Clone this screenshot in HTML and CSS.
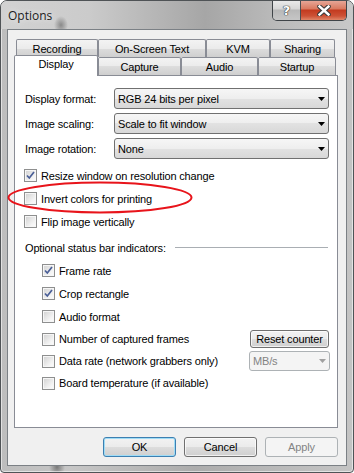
FILE: index.html
```html
<!DOCTYPE html>
<html lang="en">
<head>
  <meta charset="UTF-8" />
  <title>Options</title>
  <link rel="stylesheet" href="styles.css">
</head>
<body>
  <div class="window">
    <div class="titlebar">
      <span class="title">Options</span>
      <div class="caption">
        <span class="cap cap-help">?</span>
        <span class="cap cap-close">
          <svg width="14" height="11" viewBox="0 0 14 11">
            <path d="M2.5 1.5 L11.5 9.5 M11.5 1.5 L2.5 9.5" stroke="#3b3b3b" stroke-width="4.6" stroke-linecap="round" fill="none"/>
            <path d="M2.5 1.5 L11.5 9.5 M11.5 1.5 L2.5 9.5" stroke="#fff" stroke-width="2.4" stroke-linecap="square" fill="none"/>
          </svg>
        </span>
      </div>
    </div>

    <div class="client">
      <div class="tabs">
        <div class="tab-row row-back">
          <span class="tab t-rec">Recording</span>
          <span class="tab t-ost">On-Screen Text</span>
          <span class="tab t-kvm">KVM</span>
          <span class="tab t-sha">Sharing</span>
        </div>
        <div class="tab-row row-front">
          <span class="tab active t-dis">Display</span>
          <span class="tab t-cap">Capture</span>
          <span class="tab t-aud">Audio</span>
          <span class="tab t-sta">Startup</span>
        </div>
      </div>

      <div class="panel">
        <div class="field">
          <label>Display format:</label>
          <div class="combo"><span>RGB 24 bits per pixel</span><svg class="arrow" width="7" height="4"><polygon points="0,0 7,0 3.5,4" fill="#000"/></svg></div>
        </div>
        <div class="field">
          <label>Image scaling:</label>
          <div class="combo"><span>Scale to fit window</span><svg class="arrow" width="7" height="4"><polygon points="0,0 7,0 3.5,4" fill="#000"/></svg></div>
        </div>
        <div class="field last">
          <label>Image rotation:</label>
          <div class="combo"><span>None</span><svg class="arrow" width="7" height="4"><polygon points="0,0 7,0 3.5,4" fill="#000"/></svg></div>
        </div>

        <div class="check">
          <span class="cb on"><svg width="11" height="11" viewBox="0 0 11 11"><path d="M2 5.5 L4.3 8 L9 2" stroke="#4a5f97" stroke-width="1.7" fill="none"/></svg></span>
          <span>Resize window on resolution change</span>
        </div>
        <div class="check">
          <span class="cb"></span>
          <span>Invert colors for printing</span>
        </div>
        <div class="check">
          <span class="cb"></span>
          <span>Flip image vertically</span>
        </div>

        <div class="group-head">Optional status bar indicators:</div>

        <div class="check sub">
          <span class="cb on"><svg width="11" height="11" viewBox="0 0 11 11"><path d="M2 5.5 L4.3 8 L9 2" stroke="#4a5f97" stroke-width="1.7" fill="none"/></svg></span>
          <span>Frame rate</span>
        </div>
        <div class="check sub">
          <span class="cb on"><svg width="11" height="11" viewBox="0 0 11 11"><path d="M2 5.5 L4.3 8 L9 2" stroke="#4a5f97" stroke-width="1.7" fill="none"/></svg></span>
          <span>Crop rectangle</span>
        </div>
        <div class="check sub">
          <span class="cb"></span>
          <span>Audio format</span>
        </div>
        <div class="check sub short">
          <span class="cb"></span>
          <span>Number of captured frames</span>
          <button class="btn btn-reset">Reset counter</button>
        </div>
        <div class="check sub short">
          <span class="cb"></span>
          <span>Data rate (network grabbers only)</span>
          <div class="combo combo-off"><span>MB/s</span><svg class="arrow" width="7" height="4"><polygon points="0,0 7,0 3.5,4" fill="#a0a0a0"/></svg></div>
        </div>
        <div class="check sub short">
          <span class="cb"></span>
          <span>Board temperature (if available)</span>
        </div>
      </div>

      <div class="actions">
        <button class="btn btn-default">OK</button>
        <button class="btn">Cancel</button>
        <button class="btn" disabled>Apply</button>
      </div>
    </div>

    <svg class="highlight" width="186" height="33" viewBox="0 0 186 33">
      <ellipse cx="93" cy="16.5" rx="91.5" ry="15" fill="none" stroke="#e8141b" stroke-width="2"/>
    </svg>
  </div>
</body>
</html>
```

FILE: styles.css
```css
* {
  box-sizing: border-box;
}
body {
  margin: 0;
  font-family: "Liberation Sans", Arial, sans-serif;
  font-size: 11px;
  letter-spacing: -0.15px;
  color: #000;
  background: #fff;
}
.window {
  position: relative;
  width: 354px;
  height: 473px;
  border: 1px solid #4f5356;
  border-radius: 7px 7px 4px 4px;
  background:
    radial-gradient(ellipse 8px 10px at 56px 466px, rgba(60, 60, 60, 0.55), rgba(60, 60, 60, 0)),
    linear-gradient(to right, #bdbdbd, #c6c6c6 20%, #acacac 55%, #bababa 80%, #c4c4c4);
  box-shadow: inset 0 0 0 1px rgba(255, 255, 255, 0.55);
  display: flex;
  flex-direction: column;
  overflow: hidden;
}
.titlebar {
  height: 28px;
  display: flex;
  justify-content: space-between;
  align-items: flex-start;
  padding: 0 6px 0 7px;
  background:
    radial-gradient(ellipse 7px 9px at 60px 24px, rgba(70, 70, 70, 0.5), rgba(70, 70, 70, 0)),
    linear-gradient(to right, #d2d2d2, #cbcbcb 25%, #a6a6a6 58%, #bcbcbc 80%, #c8c8c8);
}
.title {
  font-family: "Open Sans", "Noto Sans", sans-serif;
  font-size: 12px;
  letter-spacing: 0;
  line-height: 29px;
  color: #1c1c1c;
  text-shadow: 0 0 6px rgba(255, 255, 255, 0.8);
}
.caption {
  display: flex;
  margin-top: -1px;
  height: 21px;
  border: 1px solid #3f4448;
  border-top: none;
  border-radius: 0 0 5px 5px;
  overflow: hidden;
}
.cap {
  display: flex;
  align-items: center;
  justify-content: center;
}
.cap-help {
  width: 28px;
  border-right: 1px solid #4a4e52;
  background: linear-gradient(#ececec, #d6d6d6 45%, #b8b8b8 50%, #c6c6c6);
  color: #fff;
  font-family: "DejaVu Sans", sans-serif;
  font-weight: bold;
  font-size: 13px;
  text-shadow: 0 0 1px #333, 0 0 1px #333, 0 0 1px #333;
}
.cap-close {
  width: 45px;
  background: linear-gradient(#e8ab9d, #d9795f 45%, #c33a1f 50%, #cd5236 80%, #e08668);
}
.client {
  flex: 1;
  margin: 0 6px 6px;
  border: 1px solid #7b8085;
  background: #f0f0f0;
  padding: 9px 8px 8px 6px;
  display: flex;
  flex-direction: column;
}
.tabs {
  display: flex;
  flex-direction: column;
}
.tab-row {
  display: flex;
  height: 18px;
}
.row-back {
  padding-left: 2px;
}
.tab {
  height: 18px;
  border: 1px solid #898c95;
  border-bottom: none;
  border-radius: 2px 2px 0 0;
  background: linear-gradient(#f3f3f3, #ebebeb 50%, #dddddd 50%, #cfcfcf);
  text-align: center;
  padding-top: 2px;
  line-height: 15px;
}
.tab.active {
  position: relative;
  z-index: 2;
  height: 21px;
  margin-top: -2px;
  padding-top: 1px;
  background: #fff;
}
.t-rec { width: 82px; }
.t-ost { width: 108px; }
.t-kvm { width: 64px; }
.t-sha { width: 65px; }
.t-dis { width: 84px; }
.t-cap { width: 83px; }
.t-aud { width: 77px; }
.t-sta { width: 78px; }
.panel {
  position: relative;
  z-index: 1;
  width: 324px;
  height: 353px;
  background: #fff;
  border: 1px solid #898c95;
  padding: 12px 8px 0 9px;
}
.field {
  display: flex;
  align-items: center;
  height: 21px;
  margin-bottom: 4px;
}
.field.last {
  margin-bottom: 5px;
}
.field label {
  width: 90px;
  padding-left: 1px;
}
.combo {
  width: 215px;
  height: 21px;
  display: flex;
  align-items: center;
  justify-content: space-between;
  padding: 0 3px 0 3px;
  border: 1px solid #707070;
  border-radius: 3px;
  background: linear-gradient(#f6f6f6, #eeeeee 50%, #e2e2e2 50%, #d8d8d8);
}
.combo-off {
  width: 81px;
  height: 20px;
  margin-left: auto;
  margin-right: -1px;
  border-color: #adb2b5;
  background: #f4f4f4;
  color: #838383;
}
.check {
  display: flex;
  align-items: center;
  gap: 4px;
  height: 23px;
}
.check.short {
  height: 22px;
}
.sub {
  padding-left: 18px;
}
.cb {
  width: 13px;
  height: 13px;
  flex: none;
  display: flex;
  align-items: center;
  justify-content: center;
  border: 1px solid #8e8f8f;
  background: linear-gradient(135deg, #d0d0d0, #f4f4f4 70%, #fdfdfd);
  box-shadow: inset 0 0 0 1px #f6f6f6;
}
.group-head {
  display: flex;
  align-items: center;
  gap: 9px;
  height: 23px;
  margin-top: 3px;
  padding-left: 1px;
}
.group-head::after {
  content: "";
  flex: 1;
  margin-right: 1px;
  border-top: 1px solid #a9aeb3;
}
.btn {
  font-family: inherit;
  font-size: 11px;
  letter-spacing: -0.15px;
  color: #000;
  padding: 0;
  border: 1px solid #707070;
  border-radius: 3px;
  background: linear-gradient(#f2f2f2, #ebebeb 50%, #dddddd 50%, #cfcfcf);
  box-shadow: inset 0 0 0 1px rgba(255, 255, 255, 0.7);
}
.btn-reset {
  margin-left: auto;
  width: 79px;
  height: 18px;
}
.actions {
  display: flex;
  justify-content: flex-end;
  gap: 8px;
  margin-top: 9px;
}
.actions .btn {
  width: 73px;
  height: 20px;
}
.btn-default {
  border-color: #3c7fb1;
  box-shadow: inset 0 0 0 1px #9fdcf6;
}
.btn:disabled {
  border-color: #adb2b5;
  background: #f4f4f4;
  color: #838383;
  box-shadow: none;
}
.highlight {
  position: absolute;
  z-index: 5;
  left: 6px;
  top: 180px;
}
```
